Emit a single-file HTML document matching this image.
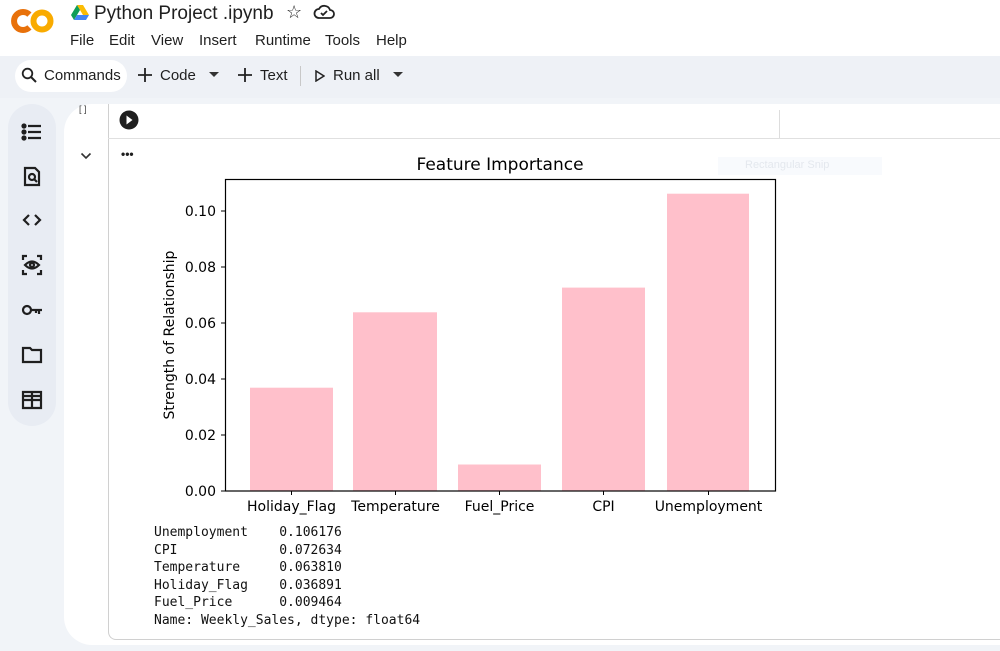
<!DOCTYPE html>
<html><head><meta charset="utf-8"><style>
*{margin:0;padding:0;box-sizing:border-box}
body{width:1000px;height:651px;background:#f1f4f8;font-family:"Liberation Sans",Arial,sans-serif;position:relative;overflow:hidden;color:#1f1f1f}
.hdr{position:absolute;left:0;top:0;width:1000px;height:56px;background:#fff}
.abs{position:absolute}
.tb{position:absolute;left:0;top:56px;width:1000px;height:42px;background:#eef1f6}
.side{position:absolute;left:8px;top:104px;width:48px;height:322px;background:#e8ecf3;border-radius:24px}
.nb{position:absolute;left:64px;top:104px;width:960px;height:541px;background:#fff;border-radius:28px 0 0 28px}
.mono{font-family:"DejaVu Sans Mono","Liberation Mono",monospace;font-size:13px;line-height:17.6px;white-space:pre;color:#111}
.t{font-size:15px}
</style></head><body>
<div class="hdr"></div>
<svg class="abs" style="left:10px;top:6px" width="46" height="30" viewBox="0 0 46 30">
<path d="M19.4 8.6A9 9 0 1 0 19.4 21.4" fill="none" stroke="#e8710a" stroke-width="6"/>
<circle cx="32" cy="15" r="8.5" fill="none" stroke="#f9ab00" stroke-width="6"/>
</svg>
<svg class="abs" style="left:71px;top:5px" width="18" height="15" viewBox="0 0 18 15"><path d="M6 0h6l6 10h-6z" fill="#fbbc04"/><path d="M6 0l3 5-6 10L0 10z" fill="#0f9d58"/><path d="M3 15l3-5h12l-3 5z" fill="#4285f4"/></svg>
<div class="abs" style="left:94px;top:3px;font-size:19px">Python Project .ipynb</div>
<div class="abs" style="left:286px;top:2px;font-size:18px">☆</div>
<svg class="abs" style="left:313px;top:4px" width="22" height="16" viewBox="0 0 22 16"><path d="M6 14h11a4 4 0 0 0 0-8 6 6 0 0 0-11-1 4.5 4.5 0 0 0 0 9z" fill="none" stroke="#222" stroke-width="1.8"/><path d="M8 9l2 2 4-4" fill="none" stroke="#222" stroke-width="1.8"/></svg>
<div class="abs t" style="left:70px;top:32px">
<span class="abs" style="left:0">File</span><span class="abs" style="left:39px">Edit</span><span class="abs" style="left:81px">View</span><span class="abs" style="left:129px">Insert</span><span class="abs" style="left:185px">Runtime</span><span class="abs" style="left:255px">Tools</span><span class="abs" style="left:306px">Help</span></div>
<div class="tb"></div>
<div class="abs" style="left:15px;top:60px;width:112px;height:32px;background:#fff;border-radius:16px"></div>
<svg class="abs" style="left:21px;top:67px" width="16" height="16" viewBox="0 0 16 16"><circle cx="6.5" cy="6.5" r="4.8" fill="none" stroke="#222" stroke-width="1.8"/><path d="M10 10l5 5" stroke="#222" stroke-width="2"/></svg>
<div class="abs t" style="left:44px;top:67px">Commands</div>
<svg class="abs" style="left:138px;top:68px" width="14" height="14"><path d="M7 0v14M0 7h14" stroke="#222" stroke-width="1.8"/></svg>
<div class="abs t" style="left:160px;top:67px">Code</div>
<svg class="abs" style="left:209px;top:72px" width="10" height="6"><path d="M0 0h10L5 5z" fill="#333"/></svg>
<svg class="abs" style="left:238px;top:68px" width="14" height="14"><path d="M7 0v14M0 7h14" stroke="#222" stroke-width="1.8"/></svg>
<div class="abs t" style="left:260px;top:67px">Text</div>
<div class="abs" style="left:300px;top:66px;width:1px;height:20px;background:#c8c8c8"></div>
<svg class="abs" style="left:315px;top:70px" width="10" height="12" viewBox="0 0 10 12"><path d="M1 1l8 5-8 5z" fill="none" stroke="#222" stroke-width="1.5"/></svg>
<div class="abs t" style="left:333px;top:67px">Run all</div>
<svg class="abs" style="left:393px;top:72px" width="10" height="6"><path d="M0 0h10L5 5z" fill="#333"/></svg>
<div class="side"></div>
<svg class="abs" style="left:20px;top:120px" width="24" height="300" viewBox="0 0 24 300" fill="none" stroke="#1f1f1f" stroke-width="2.2">
<circle cx="4" cy="6" r="1.5" fill="#1f1f1f"/><circle cx="4" cy="12" r="1.5" fill="#1f1f1f"/><circle cx="4" cy="18" r="1.5" fill="#1f1f1f"/><path d="M8 6h13M8 12h13M8 18h13"/>
<path d="M5 48h10l4 4v13H5z"/><circle cx="12" cy="57" r="3"/><path d="M14 59l3 3"/>
<path d="M9 95l-5 5 5 5M15 95l5 5-5 5"/>
<path d="M3 140v-4h4M17 136h4v4M21 150v4h-4M7 154H3v-4"/><path d="M5 145q7-7 14 0q-7 7-14 0z"/><circle cx="12" cy="145" r="2"/>
<circle cx="7" cy="190" r="4"/><path d="M11 190h11M19 190v4M16 190v3"/>
<path d="M3 228h7l2 2h9v12H3z"/>
<path d="M3 272h18v16H3zM3 280h18M12 272v16M3 276h18"/>
</svg>
<div class="nb"></div>
<div class="abs" style="left:108px;top:104px;width:1px;height:500px;background:#d0d0d0"></div>
<div class="abs" style="left:108px;top:600px;width:900px;height:40px;border-left:1px solid #d0d0d0;border-bottom:1px solid #d0d0d0;border-radius:0 0 0 8px"></div>
<div class="abs" style="left:108px;top:138px;width:892px;height:1px;background:#e0e0e0"></div>
<div class="abs" style="left:779px;top:110px;width:1px;height:28px;background:#ddd"></div>
<div class="abs" style="left:79px;top:104px;font-size:9px;color:#444">[ ]</div>
<svg class="abs" style="left:119px;top:110px" width="20" height="20" viewBox="0 0 20 20"><circle cx="10" cy="10" r="9.5" fill="#1f1f1f"/><path d="M7.5 5.5l6 4.5-6 4.5z" fill="#fff"/></svg>
<svg class="abs" style="left:80px;top:152px" width="12" height="8" viewBox="0 0 12 8"><path d="M1.5 1.5l4.5 4.5 4.5-4.5" fill="none" stroke="#333" stroke-width="1.6"/></svg>
<div class="abs" style="left:121px;top:147px;font-size:12px;font-weight:bold">•••</div>
<div class="abs" style="left:718px;top:157px;width:164px;height:18px;background:#f8fafd"></div>
<div class="abs" style="left:745px;top:159px;font-size:11px;color:#e4e8ee">Rectangular Snip</div>
<svg class="abs" style="left:140px;top:145px" width="640" height="375" viewBox="140 145 640 375" font-family="DejaVu Sans,sans-serif" font-size="14" fill="#000">
<text x="500" y="170" text-anchor="middle" font-size="17">Feature Importance</text>
<g fill="#ffc0cb">
<rect x="250" y="387.7" width="83" height="103.3"/>
<rect x="353" y="312.3" width="84" height="178.7"/>
<rect x="458" y="464.5" width="83" height="26.5"/>
<rect x="562" y="287.6" width="83" height="203.4"/>
<rect x="667" y="193.7" width="82" height="297.3"/>
</g>
<rect x="225.5" y="179.5" width="550" height="311.5" fill="none" stroke="#000" stroke-width="1.2"/>
<g stroke="#000" stroke-width="1">
<path d="M221 491h4M221 435h4M221 379h4M221 323h4M221 267h4M221 211h4"/>
<path d="M291.5 491v4M395.5 491v4M499.5 491v4M603.5 491v4M708.5 491v4"/>
</g>
<g text-anchor="end">
<text x="216" y="496">0.00</text><text x="216" y="440">0.02</text><text x="216" y="384">0.04</text><text x="216" y="328">0.06</text><text x="216" y="272">0.08</text><text x="216" y="216">0.10</text>
</g>
<g text-anchor="middle">
<text x="291.5" y="511">Holiday_Flag</text><text x="395.5" y="511">Temperature</text><text x="499.5" y="511">Fuel_Price</text><text x="603.5" y="511">CPI</text><text x="708.5" y="511">Unemployment</text>
</g>
<text transform="translate(174 335) rotate(-90)" text-anchor="middle">Strength of Relationship</text>
</svg>
<div class="abs mono" style="left:154px;top:524px">Unemployment    0.106176
CPI             0.072634
Temperature     0.063810
Holiday_Flag    0.036891
Fuel_Price      0.009464
Name: Weekly_Sales, dtype: float64</div>
</body></html>
